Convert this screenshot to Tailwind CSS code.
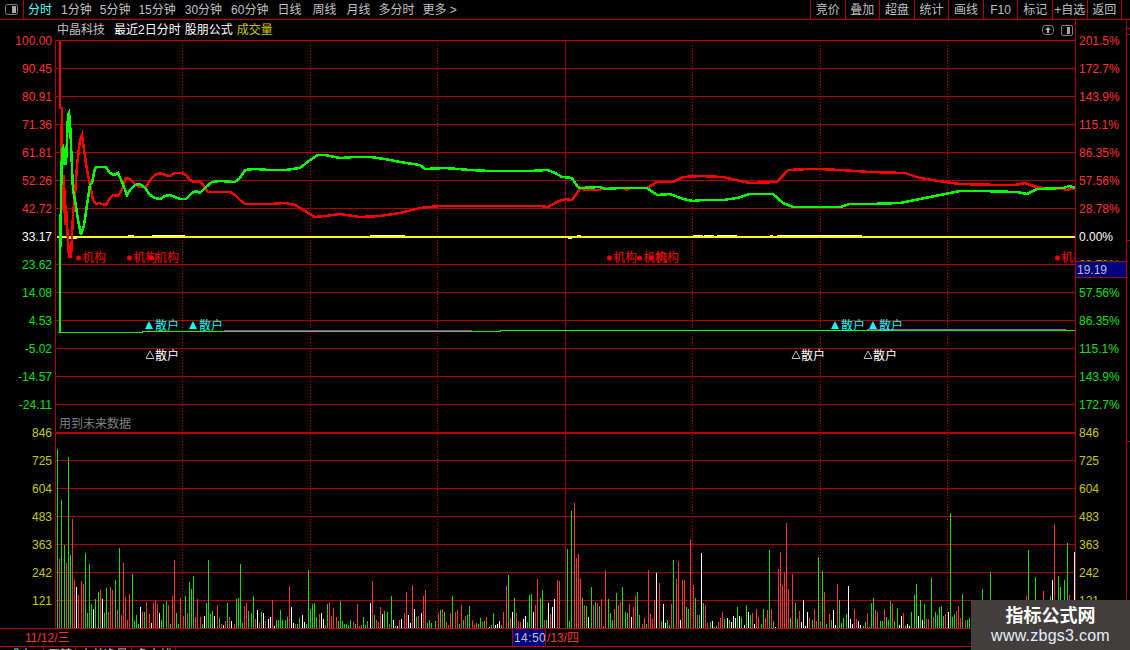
<!DOCTYPE html>
<html lang="zh">
<head>
  <meta charset="UTF-8" />
  <title>中晶科技 分时</title>
  <script src="https://cdn.jsdelivr.net/npm/@tailwindcss/browser@4"></script>
</head>
<body class="bg-black">
<div class="relative w-[1130px] h-[650px] overflow-hidden bg-black text-[12px] leading-none text-[#c0c0c0] font-['Liberation_Sans','Noto_Sans_CJK_SC',sans-serif]">

  <!-- top toolbar -->
  <div class="flex h-[20px] border-b border-[#c00000]">
    <div class="flex items-center justify-center w-[24px] border-r border-[#b00000]">
      <svg width="13" height="11" viewBox="0 0 13 11" fill="none"><rect x="0.5" y="0.5" width="12" height="10" rx="2" stroke="#808080"/><rect x="7" y="2" width="4" height="7" fill="#a8a8a8"/></svg>
    </div>
    <div class="flex items-center gap-[9px] pl-[4px] w-[786px]">
      <span class="text-[#55ffff]">分时</span>
      <span>1分钟</span>
      <span class="-ml-px">5分钟</span>
      <span class="-ml-[1px]">15分钟</span>
      <span>30分钟</span>
      <span>60分钟</span>
      <span>日线</span>
      <span class="ml-[2px]">周线</span>
      <span class="ml-px">月线</span>
      <span class="-ml-px">多分时</span>
      <span class="-ml-px">更多 &gt;</span>
    </div>
    <div class="flex h-full w-[312px] border-l border-[#b00000] divide-x divide-[#b00000] border-r">
      <span class="flex-1 flex items-center justify-center">竞价</span>
      <span class="flex-1 flex items-center justify-center">叠加</span>
      <span class="flex-1 flex items-center justify-center">超盘</span>
      <span class="flex-1 flex items-center justify-center">统计</span>
      <span class="flex-1 flex items-center justify-center">画线</span>
      <span class="flex-1 flex items-center justify-center">F10</span>
      <span class="flex-1 flex items-center justify-center">标记</span>
      <span class="flex-1 flex items-center justify-center">+自选</span>
      <span class="flex-1 flex items-center justify-center">返回</span>
    </div>
  </div>

  <!-- chart area -->
  <div class="flex h-[608px]">
    <div id="leftAxis" class="w-[55px] pt-[7px] pr-[3px] text-right"></div>

    <div class="w-[1020px]">
      <div class="flex items-center h-[20px] pl-[2px] pr-[2px]">
        <span class="mr-[9px]">中晶科技</span>
        <span class="mr-[4px] text-white">最近2日分时</span>
        <span class="mr-[4px] text-white">股朋公式</span>
        <span class="text-[#c8c800]">成交量</span>
        <span class="flex items-center gap-[7px] ml-auto">
          <svg width="12" height="10" viewBox="0 0 12 10" fill="none"><rect x="0.5" y="0.5" width="11" height="9" rx="3" stroke="#808080"/><path d="M6 2 L9 5 H7 V8 H5 V5 H3 Z" fill="#b0b0b0"/></svg>
          <svg width="12" height="11" viewBox="0 0 12 11" fill="none"><rect x="0.5" y="0.5" width="11" height="10" rx="1.5" stroke="#808080"/><rect x="6" y="2" width="3" height="7" fill="#a8a8a8"/></svg>
        </span>
      </div>
      <svg id="chart" class="block" width="1020" height="588" viewBox="55 40 1020 588">
        <g id="grid"></g>
        <g id="bars"></g>
        <rect x="55" y="40" width="1" height="588" fill="#b00000"/>
        <rect x="565" y="40" width="1" height="588" fill="#a00000"/>

        <!-- yellow zero line with the white marks beside it -->
        <g fill="#ffffff">
          <rect x="68" y="238" width="9" height="1"/><rect x="128" y="235" width="6" height="1"/><rect x="152" y="235" width="33" height="1"/>
          <rect x="370" y="235" width="35" height="1"/><rect x="568" y="238" width="4" height="1"/><rect x="577" y="235" width="4" height="1"/>
          <rect x="693" y="235" width="10" height="1"/><rect x="704" y="235" width="10" height="1"/><rect x="717" y="235" width="20" height="1"/>
          <rect x="770" y="235" width="3" height="1"/><rect x="777" y="235" width="85" height="1"/>
        </g>
        <rect x="57" y="236" width="1018" height="2" fill="#ffff00"/>

        <!-- lower pair -->
        <rect x="224" y="330" width="248" height="1" fill="#ff00ff"/>
        <rect x="867" y="329" width="199" height="1" fill="#b040c0"/>
        <polyline points="58,332.5 142,332.5 142,331.5 500,331.5 500,330.5 1075,330.5" fill="none" stroke="#00ff00" stroke-width="1" shape-rendering="crispEdges"/>
        <rect x="59" y="265" width="2" height="67" fill="#00ff00"/>

        <polyline fill="none" stroke="#ff0000" stroke-width="2.5" shape-rendering="crispEdges" points="60,41 60,108 62,108 61,175 63,210 64,175 65,225 66,205 67,225 69,257 71,257 73,215 75,195 77,165 80,140 82,135 84,150 87,170 90,185 93,200 96,204 99,203 102,204 106,205 110,198 113,195 118,196 122,190 126,178 130,179 135,184 140,187 146,187 150,180 155,175 160,173 165,175 170,176 175,173 182,173 186,175 190,180 194,182 198,181 202,183 208,192 214,192 230,192 235,195 240,200 245,204 270,204 285,203 295,205 305,211 315,217 325,216 340,214 360,217 380,216 400,213 420,208 440,206 470,206 500,206 530,206 540,206 548,207 557,202 565,199 572,200 580,189 590,190 600,190 603,188 623,188 627,190 630,188 647,188 657,182 673,182 683,177 700,176 723,177 740,181 750,183 777,182 788,170 810,169 820,169 840,170 870,172 905,173 920,178 945,182 960,184 1000,185 1015,185 1025,183 1033,186 1043,188 1063,189 1067,190 1075,188"/>
        <polyline fill="none" stroke="#00ff00" stroke-width="2.5" shape-rendering="crispEdges" points="60,265 61,198 62,150 63,148 64,165 65,148 66,165 68,115 69,113 70,122 73,190 75,200 78,220 81,235 84,225 87,205 90,185 92,183 95,168 97,167 102,167 106,167 110,173 114,175 118,173 122,182 127,195 130,190 135,185 140,184 145,188 150,195 155,198 160,199 165,196 170,195 180,199 186,199 192,193 196,191 200,193 205,188 212,182 220,181 235,182 240,178 245,170 255,169 270,170 285,170 300,168 310,160 318,155 325,155 340,158 355,157 370,157 385,159 400,162 420,165 425,169 445,168 470,170 490,171 510,171 530,171 548,170 555,173 562,177 572,178 578,187 580,188 600,187 605,189 620,188 647,188 657,195 670,194 683,199 693,201 703,200 723,200 737,198 750,194 773,194 783,203 793,207 840,207 850,204 870,204 900,203 920,199 940,195 960,191 980,191 1017,192 1027,194 1037,189 1063,188 1070,186 1075,188"/>

        <!-- signal labels -->
        <g fill="#ff0000" font-size="12">
          <circle cx="78.5" cy="258" r="2.5"/><text x="82" y="262">机构</text>
          <circle cx="129.5" cy="258" r="2.5"/><text x="133" y="262">机构</text>
          <circle cx="151.5" cy="258" r="2.5"/><text x="155" y="262">机构</text>
          <circle cx="609.5" cy="258" r="2.5"/><text x="613" y="262">机构</text>
          <circle cx="639.5" cy="258" r="2.5"/><text x="643" y="262">机构</text>
          <circle cx="651.5" cy="258" r="2.5"/><text x="655" y="262">机构</text>
          <circle cx="1057.5" cy="258" r="2.5"/><text x="1061" y="262">机构</text>
        </g>
        <g fill="#00ffff" font-size="12">
          <polygon points="149,321 153,329 145,329"/><text x="155" y="330">散户</text>
          <polygon points="193,321 197,329 189,329"/><text x="199" y="330">散户</text>
          <polygon points="835,321 839,329 831,329"/><text x="841" y="330">散户</text>
          <polygon points="873,321 877,329 869,329"/><text x="879" y="330">散户</text>
        </g>
        <g fill="#ffffff" font-size="12">
          <polygon points="150,351 154,358.5 146,358.5" fill="none" stroke="#c0c0c0"/><text x="155" y="360">散户</text>
          <polygon points="796,351 800,358.5 792,358.5" fill="none" stroke="#c0c0c0"/><text x="801" y="360">散户</text>
          <polygon points="868,351 872,358.5 864,358.5" fill="none" stroke="#c0c0c0"/><text x="873" y="360">散户</text>
        </g>
        <text x="59" y="428" fill="#808080" font-size="12">用到未来数据</text>
      </svg>
    </div>

    <div class="relative w-[51px] border-l border-[#b00000]">
      <div id="rightAxis" class="pt-[7px] pl-[3px]"></div>
      <div class="absolute top-[241px] left-0 w-full h-[17px] flex items-center pl-[1px] bg-[#000080] border-y border-[#b00000] text-[#c0c0c0]">19.19</div>
    </div>

    <div class="flex-1 flex flex-col border-l border-[#b00000]">
      <div class="mt-[8px] h-px bg-[#b00000]"></div>
      <div class="mt-[5px] h-px bg-[#b00000]"></div>
      <div class="mt-[205px] h-px bg-[#b00000]"></div>
      <div class="mt-[200px] h-px bg-[#b00000]"></div>
    </div>
  </div>

  <!-- date strip -->
  <div class="flex items-center h-[19px] border-y border-[#c00000] text-[#ff3232]">
    <div class="w-[512px] pl-[25px]">11/12/三</div>
    <div class="flex items-center h-full w-[34px] pl-[1px] bg-[#000080] border-x border-[#b00000] text-[#c0c0c0] tracking-[0.4px]">14:50</div>
    <div class="pl-[1px]">/13/四</div>
  </div>

  <!-- bottom tabs, cut by the window edge -->
  <div class="flex h-[3px] overflow-hidden text-[12px]">
    <span class="w-[44px] pl-[8px] pt-[2px] border-r border-[#b00000] text-[#55ffff]">成交量</span>
    <span class="w-[32px] pl-[4px] pt-[2px] border-r border-[#b00000]">周转率</span>
    <span class="w-[56px] pl-[4px] pt-[2px] border-r border-[#b00000]">大单净量</span>
    <span class="w-[44px] pl-[4px] pt-[2px] border-r border-[#b00000]">多空线</span>
  </div>

  <!-- watermark -->
  <div class="absolute left-[971px] top-[600px] w-[159px] h-[50px] bg-[#433e3e] flex flex-col items-center pt-[6px]">
    <span class="text-[18px] leading-[20px] font-bold text-white">指标公式网</span>
    <span class="text-[16px] leading-[20px] tracking-[0.25px] text-[#e4eef8]">www.zbgs3.com</span>
  </div>
</div>

<script>
  const NS = 'http://www.w3.org/2000/svg';

  function rect(parent, x, y, w, h, fill) {
    const r = document.createElementNS(NS, 'rect');
    r.setAttribute('x', x); r.setAttribute('y', y);
    r.setAttribute('width', w); r.setAttribute('height', h);
    r.setAttribute('fill', fill);
    parent.appendChild(r);
  }

  // horizontal grid, every 28px from y=40
  const grid = document.getElementById('grid');
  for (let k = 0; k < 21; k++) {
    const y = 40 + 28 * k;
    if (y === 236) continue;
    rect(grid, 55, y, 1020, y === 432 ? 2 : 1, y === 40 ? '#c80000' : '#b00000');
  }
  // dotted session lines
  [182, 310, 437, 692, 820, 947].forEach(x => {
    for (let y = 42; y < 628; y += 3) rect(grid, x, y, 1, 1, '#c80000');
  });

  // volume bars: x, colour, height
  const vol = `57g179 59r69 61g128 64g83 66r65 68g171 70g73 72r109 74r48 76w41 78r33 81r47 83r44 85g75 87g15 89g64 91g24 93w19 95g29 98g36 100r38 102w29 104g15 106g40 108r16 110r41 112r38 115g48 117r18 119g80 121r13 123r65 125r31 127r8 129r34 132g54 134g7 136g13 138g4 140w21 142r16 144g16 146r26 149r14 151w5 153r25 155r28 157r24 159w15 161g8 163g24 166g27 168r23 170g4 172r32 174r68 176g15 178g4 180r30 183r12 185g32 187r15 189g46 191g39 193g52 195r11 197r29 200r11 202g4 204w12 206g25 208g68 210g14 212g17 214w12 217r23 219g10 221r4 223w3 225r7 227g25 229r11 231w7 234r4 236g29 238g30 240g64 242g5 244r22 246r25 248g17 251g15 253g32 255r9 257w18 259r5 261g16 263w15 265r7 268w9 270w11 272r28 274w2 276g8 278g8 280g18 282g8 285g8 287g11 289r42 291w21 293w5 295r4 297g4 299g10
  302w13 304w6 306g4 308g58 310g19 312g24 314g25 316g11 319r14 321w15 323w9 325r3 327g24 329r26 331r12 333r20 336r11 338g7 340g27 342g7 344g4 346g4 348g3 350g8 353r6 355g4 357r24 359r2 361r3 363g11 365g3 367g7 370w25 372r47 374g13 376r8 378r6 380r21 382w14 384g17 387g16 389r4 391g32 393w8 395g2 397w2 399r8 401w9 404r15 406r36 408w13 410w5 412r43 414w19 416g11 418r12 421w15 423r32 425r38 427g5 429g8 431g5 435g7 438r15 440g18 442r19 444g16 446r6 448r3 450r15 452g32 455r16 457r18 459g4 461r23 463g8 465r12 467g13 469g22 472r8 474r3 476r5 478g4 480g10 482r6 484g7
  486r11 489w1 491g3 493g15 495w3 497w4 499w7 501g3 503r16 506r42 508g53 510r10 512w16 514g30 516r15 518r7 520r6 523w9 525w12 527g6 529g33 531g34 533w16 535r23 537r49 540g30 542g38 544r8 546g8 548w25 550r14 552w21 554w29 557r48 559r47 565r41 567g79 569g7 571g117 574r125 576r70 578r74 580r49 582g30 584r23 586g22 588w11 591g41 593r23 595g26 597r25 599g22 601r29 603r2 605r58 608g29 610g15 612g8 614r19 616g35 618r23 620r26 622g41 625g16 627g15 629r24 631w11 633r21 635r32 637g36 639g13 642r4 644r10 646g4 648r58 650r14 652r9 654r28 656w55 659r45 661g7 663w24 665w5 667g8 669g3 671r24 673g68 676r49 678r67 680w8 682r48 684r48 686g21 688g19 690r89 693r43 695g30 697r13 699g13 701w75 703g25 705r23 707r5 710g6 712w7 714g1 716g2 718r6 720r10 722r16 724g9 727w10 729g8 731w6 733w12 735w10 737g21 739w12 741g11 744w3 746g23 748w16 750g13 752r15 754w4 756r19 758r11 761g4 763g19 765r10 767r18 769g78 771r19 773g7 775w1
  778r59 780r76 782r43 784r55 786r105 788r39 790g10 792r54 795g25 797g9 799r17 801w6 803w28 805w2 807w16 809r10 812g8 814r19 816r7 818g71 820r6 822g57 824r36 826g4 829r14 831g8 833w18 835w3 837r44 839g28 841g5 843g10 846g14 848w42 850w9 852w4 854r19 856r9 858w7 860w3 863g2 865g6 867r15 869r1 871g25 873g30 875r18 877r16 880g7 882g7 884r19 886g11 888g8 890g27 892r24 894g7 897g20 899w3 901w12 903r15 905g2 907w4 909w2 911g16 914g33 916g44 918w12 920g28 922w8 924g24 926r9 928r9 931g50 933r11 935g16 937g13 939g21 941g22 943g12 945r14 948w16 950g115 952g11 954g14 956r17 958r22 960r10 962g34 965r8 967g8 969g10
  982g39 990g56 1026r32 1028g78 1035g51 1043r37 1050g32 1052w48 1054r104 1058g52 1060g41 1064g48 1067g85 1069r33 1074w76`;
  const colours = { g: '#10dc10', r: '#ff3232', w: '#ffffff' };
  const bars = document.getElementById('bars');
  vol.trim().split(/\s+/).forEach(item => {
    const m = item.match(/^(\d+)([grw])(\d+)$/);
    rect(bars, +m[1], 628 - +m[3], 1, +m[3], colours[m[2]]);
  });

  // axis labels, one row per grid line
  const green = 'text-[#10e010]', red = 'text-[#ff3232]', white = 'text-white', yellow = 'text-[#c8c800]';
  const volume = ['846', '725', '604', '483', '363', '242', '121'].map(t => [t, yellow]);
  const leftLabels = [
    ['100.00', red], ['90.45', red], ['80.91', red], ['71.36', red], ['61.81', red], ['52.26', red], ['42.72', red],
    ['33.17', white],
    ['23.62', green], ['14.08', green], ['4.53', green], ['-5.02', green], ['-14.57', green], ['-24.11', green],
    ...volume
  ];
  const rightLabels = [
    ['201.5%', red], ['172.7%', red], ['143.9%', red], ['115.1%', red], ['86.35%', red], ['57.56%', red], ['28.78%', red],
    ['0.00%', white],
    ['28.78%', green], ['57.56%', green], ['86.35%', green], ['115.1%', green], ['143.9%', green], ['172.7%', green],
    ...volume
  ];
  function fill(id, labels) {
    const el = document.getElementById(id);
    labels.forEach(([t, c]) => {
      const row = document.createElement('div');
      row.className = 'h-[28px] leading-[28px] ' + c;
      row.textContent = t;
      el.appendChild(row);
    });
  }
  fill('leftAxis', leftLabels);
  fill('rightAxis', rightLabels);
</script>
</body>
</html>
